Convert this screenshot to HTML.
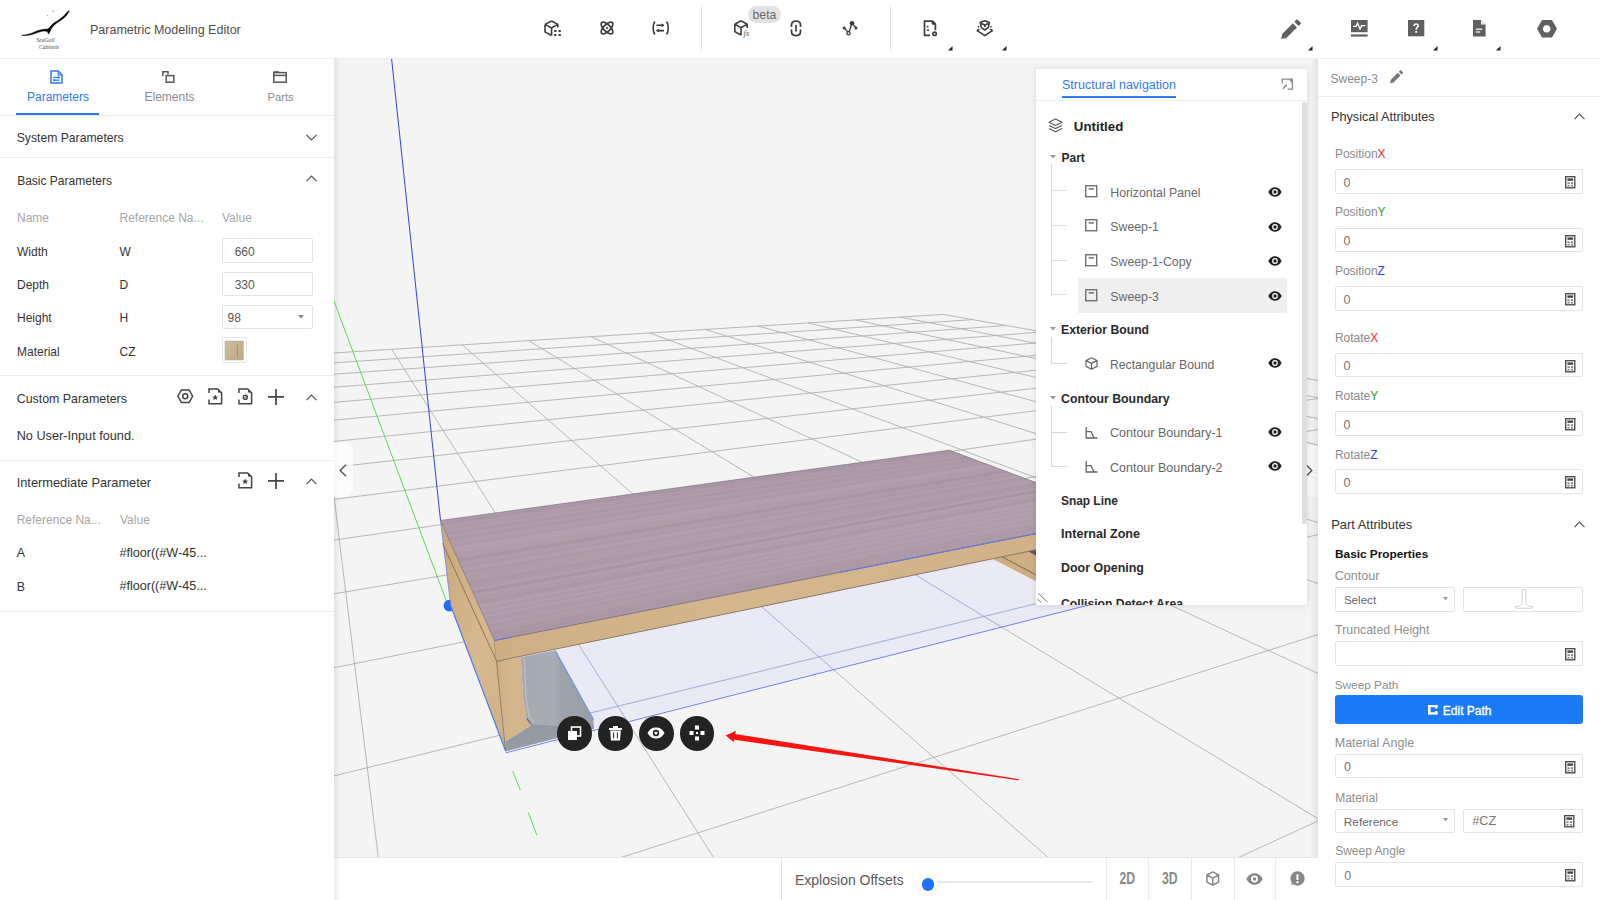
<!DOCTYPE html><html><head><meta charset="utf-8"><style>
*{margin:0;padding:0;box-sizing:border-box}
html,body{width:1600px;height:900px;overflow:hidden;background:#fff;font-family:"Liberation Sans",sans-serif}
.t{position:absolute;white-space:nowrap;line-height:normal}
svg{position:absolute;overflow:visible}
</style></head><body><div style="position:absolute;left:0px;top:0px;width:1600px;height:58px;background:#fff"></div>
<div style="position:absolute;left:0px;top:58px;width:1600px;height:1px;background:#ececec"></div>
<svg style="left:14px;top:4px" width="64" height="50" viewBox="0 0 64 50">
<path d="M7.8,31.2 C12,31 17,30 22.2,27.2 C26,25.6 30,25 33.3,25.2 L35.6,23.3 C37.5,21 39,19.6 41.1,18.3 C43,17 45,16 46.1,15 C48.5,13 50,12 51.1,10.6 C52.5,9 53.6,7.8 54.8,6.6 L55.1,7.3 C54,9 53,10.6 52.2,11.7 C50.5,13.5 49,15 47.2,16.1 C45,17.5 43.5,18.5 42.2,19.4 C40,21 38,23 36.9,25.6 L35.5,28.5 L34.4,30.2 L33.6,27.6 C31,26.6 28,27 25,28 C19,30.2 13,32.5 7.8,31.2 Z" fill="#000" stroke="#000" stroke-width="0.5"/>
<circle cx="39.2" cy="7.2" r="0.6" fill="#555"/><circle cx="33.6" cy="11.4" r="0.5" fill="#888"/>
<text x="22.5" y="37.6" font-family="Liberation Serif" font-style="italic" font-size="5.6" fill="#444">SeaGull</text>
<text x="25" y="44.8" font-family="Liberation Serif" font-style="italic" font-size="5.6" fill="#444">Cabinets</text>
</svg>
<div class="t" style="left:90.0px;top:23.3px;font-size:12.5px;color:#4e4e4e;font-weight:400;">Parametric Modeling Editor</div>
<svg style="left:544px;top:20px" width="18" height="17" viewBox="0 0 18 17" fill="none" stroke="#3c3c3c" stroke-width="1.6" stroke-linejoin="round">
<path d="M7.6,1 L13.8,4.4 L13.8,7.5 M1,4.4 L7.6,1 M1,4.4 L1,11.9 L7.6,15.5 M1,4.4 L7.6,8 L13.8,4.4 M7.6,8 L7.6,15.5"/>
<g fill="#3c3c3c" stroke="none"><rect x="10.2" y="10" width="2.3" height="2"/><rect x="14.5" y="10" width="2.3" height="2"/><rect x="10.2" y="14" width="2.3" height="2"/><rect x="14.5" y="14" width="2.3" height="2"/></g></svg>
<svg style="left:599px;top:20px" width="16" height="16" viewBox="0 0 16 16" fill="none" stroke="#3c3c3c" stroke-width="1.7">
<ellipse cx="8" cy="8" rx="7.6" ry="3.4" transform="rotate(45 8 8)"/><ellipse cx="8" cy="8" rx="7.6" ry="3.4" transform="rotate(-45 8 8)"/><circle cx="8" cy="8" r="0.9" stroke-width="1"/></svg>
<svg style="left:652px;top:21px" width="18" height="14" viewBox="0 0 18 14" fill="none" stroke="#3c3c3c" stroke-width="1.6">
<path d="M2.8,0.5 C0.6,4 0.6,10 2.8,13.5 M14.6,0.5 C16.8,4 16.8,10 14.6,13.5 M4.5,4.3 L11.5,4.3 M4.5,9.6 L12,9.6"/>
<path d="M9.6,2.3 L12.5,4.3 L9.6,6.3 Z M7.2,7.6 L4.3,9.6 L7.2,11.6 Z" fill="#3c3c3c" stroke="none"/></svg>
<div style="position:absolute;left:701px;top:6px;width:1px;height:45px;background:#e4e4e4"></div>
<div style="position:absolute;left:890px;top:6px;width:1px;height:45px;background:#e4e4e4"></div>
<svg style="left:734px;top:20px" width="18" height="18" viewBox="0 0 18 18" fill="none" stroke="#3c3c3c" stroke-width="1.6" stroke-linejoin="round">
<path d="M7,0.8 L13.2,4.2 L13.2,8 M0.8,4.2 L7,0.8 M0.8,4.2 L0.8,11.6 L7,15 M0.8,4.2 L7,7.6 L13.2,4.2 M7,7.6 L7,15"/></svg>
<div class="t" style="left:743.5px;top:28.8px;font-size:8px;color:#555;font-weight:400;font-family:'Liberation Serif'"><i>fx</i></div>
<div style="position:absolute;left:748px;top:6px;width:33px;height:17px;background:#e2e2e2;border-radius:9px"></div>
<div class="t" style="left:752.6px;top:7.6px;font-size:12.2px;color:#6a6a6a;font-weight:400;">beta</div>
<svg style="left:790px;top:20px" width="12" height="17" viewBox="0 0 12 17" fill="none" stroke="#3c3c3c" stroke-width="1.7" stroke-linecap="round">
<path d="M1.5,6.2 L1.5,5 C1.5,2.6 3.4,1 6,1 C8.6,1 10.5,2.6 10.5,5 L10.5,6.2 M1.5,10 L1.5,11.6 C1.5,14 3.4,15.6 6,15.6 C8.6,15.6 10.5,14 10.5,11.6 L10.5,10 M6,5.6 L6,10.8"/></svg>
<svg style="left:842px;top:20px" width="17" height="17" viewBox="0 0 17 17" fill="none" stroke="#3c3c3c" stroke-width="1.3">
<path d="M2.3,8 L6.4,12.6 M7.1,12 L9.9,3.3 M10.3,3.6 L14.2,8"/>
<circle cx="10" cy="3.2" r="2.3" fill="#3c3c3c" stroke="none"/><circle cx="2.2" cy="8" r="1.5" fill="#3c3c3c" stroke="none"/><circle cx="14" cy="8" r="1.5" fill="#3c3c3c" stroke="none"/><circle cx="6.5" cy="13.3" r="1.6" fill="#fff"/></svg>
<svg style="left:923px;top:20px" width="17" height="17" viewBox="0 0 17 17" fill="none" stroke="#3c3c3c" stroke-width="1.7" stroke-linejoin="round">
<path d="M7,15.3 L1.5,15.3 L1.5,1.2 L9.6,1.2 L12.4,4.2 L12.4,10.2 M9.4,1.4 L9.6,3.8 L12.2,4"/>
<path d="M3.8,6.6 L5.4,6.6 M3.8,10.2 L6,10.2" stroke-width="1.6"/><circle cx="11.6" cy="13.8" r="1.7"/></svg>
<svg style="left:976px;top:20px" width="18" height="17" viewBox="0 0 18 17" fill="none" stroke="#3c3c3c" stroke-width="1.6" stroke-linejoin="round">
<path d="M3.4,9.2 L1.2,10.7 L8.8,15.6 L16.4,10.7 L14.2,9.2"/>
<path d="M8.8,0.8 L13.4,2.6 L12.2,7.6 L8.8,10 L5.4,7.6 L4.2,2.6 Z M5.2,3.4 L8.8,5 L12.4,3.4 M8.8,5 L8.8,7"/>
<path d="M2,6.4 L3.2,7.2 M15.6,6.4 L14.4,7.2"/></svg>
<svg style="left:948px;top:45.5px" width="4.5" height="4.5" viewBox="0 0 4 4"><path d="M4,0 L4,4 L0,4 Z" fill="#222"/></svg>
<svg style="left:1002px;top:45.5px" width="4.5" height="4.5" viewBox="0 0 4 4"><path d="M4,0 L4,4 L0,4 Z" fill="#222"/></svg>
<svg style="left:1308px;top:45.5px" width="4.5" height="4.5" viewBox="0 0 4 4"><path d="M4,0 L4,4 L0,4 Z" fill="#222"/></svg>
<svg style="left:1433px;top:45.5px" width="4.5" height="4.5" viewBox="0 0 4 4"><path d="M4,0 L4,4 L0,4 Z" fill="#222"/></svg>
<svg style="left:1496px;top:45.5px" width="4.5" height="4.5" viewBox="0 0 4 4"><path d="M4,0 L4,4 L0,4 Z" fill="#222"/></svg>
<svg style="left:1281px;top:18.5px" width="20.5" height="20.5" viewBox="0 0 20 20">
<path d="M0.2,19.6 L1.2,14.6 L11.6,4.2 L15.6,8.2 L5.2,18.6 Z" fill="#606060"/><path d="M13,2.6 L14.9,0.7 C15.3,0.3 15.9,0.3 16.3,0.7 L19.1,3.5 C19.5,3.9 19.5,4.5 19.1,4.9 L17.2,6.8 Z" fill="#606060"/></svg>
<svg style="left:1351px;top:19.5px" width="17" height="17" viewBox="0 0 17 17">
<rect x="0" y="0" width="16.6" height="12.2" fill="#606060"/><rect x="0" y="14.4" width="16.6" height="2.2" fill="#606060"/>
<path d="M2,6.4 L5,6.4 L6.6,3.2 L9,9 L10.6,5.6 L14.4,5.6" fill="none" stroke="#fff" stroke-width="1.3"/></svg>
<svg style="left:1408px;top:20.3px" width="16.3" height="16.3" viewBox="0 0 16 16">
<rect width="16" height="16" fill="#606060"/><path d="M5.2,6 C5.2,4.2 6.4,3.2 8,3.2 C9.7,3.2 10.8,4.2 10.8,5.6 C10.8,7.4 8.8,7.6 8.8,9.6 L7.2,9.6 C7.2,7.2 9.1,7 9.1,5.7 C9.1,5 8.6,4.6 8,4.6 C7.3,4.6 6.9,5.1 6.9,6 Z" fill="#fff"/><rect x="7.1" y="10.8" width="1.8" height="1.8" fill="#fff"/></svg>
<svg style="left:1472.5px;top:20.3px" width="13" height="17" viewBox="0 0 13 17">
<path d="M0,0 L8,0 L12.6,4.6 L12.6,16.6 L0,16.6 Z" fill="#606060"/><path d="M8,0 L8,4.6 L12.6,4.6 Z" fill="#fff"/><path d="M8.6,0.6 L8.6,3.8 L11.8,3.8" fill="#ddd"/>
<rect x="2.8" y="8.6" width="6.4" height="1.2" fill="#fff"/><rect x="2.8" y="11.4" width="4.4" height="1.2" fill="#fff"/></svg>
<svg style="left:1537px;top:19.5px" width="20" height="17.5" viewBox="0 0 20 17.5">
<path d="M5,0 L15,0 L20,8.75 L15,17.5 L5,17.5 L0,8.75 Z M9.7,5 A3.8,3.8 0 1 0 9.71,5 Z" fill="#606060" fill-rule="evenodd"/></svg>
<div style="position:absolute;left:0px;top:59px;width:334px;height:841px;background:#fff"></div>
<svg style="left:50px;top:69.5px" width="13" height="14" viewBox="0 0 13 14" fill="none" stroke="#2f7bea" stroke-width="1.5">
<path d="M1,1 L8.2,1 L12,4.8 L12,13 L1,13 Z"/><path d="M8.2,1 L8.2,4.8 L12,4.8" stroke-width="1.2"/><path d="M3.4,7.4 L9.6,7.4 M3.4,10.2 L9.6,10.2" stroke-width="1.2"/><path d="M8.2,6.2 L9.8,7.4 L8.2,8.6 M4.8,9 L3.2,10.2 L4.8,11.4" stroke-width="1"/></svg>
<div class="t" style="left:27.0px;top:90.1px;font-size:12px;color:#2f7bea;font-weight:400;">Parameters</div>
<div style="position:absolute;left:16px;top:112.7px;width:83px;height:2.3px;background:#2f7bea"></div>
<svg style="left:162px;top:71px" width="13" height="12" viewBox="0 0 13 12" fill="none" stroke="#555" stroke-width="1.5">
<path d="M0.8,5 L0.8,0.8 L6,0.8 L6,3.4"/><rect x="4.2" y="4.6" width="7.6" height="6.6"/></svg>
<div class="t" style="left:144.5px;top:90.1px;font-size:12px;color:#8a8a8a;font-weight:400;">Elements</div>
<svg style="left:272.5px;top:70.5px" width="14" height="12" viewBox="0 0 14 12" fill="none" stroke="#555" stroke-width="1.5">
<rect x="0.8" y="1.6" width="12.4" height="9.6"/><path d="M0.8,4.4 L13.2,4.4"/><path d="M0.8,0.8 L6,0.8" stroke-width="1.2"/></svg>
<div class="t" style="left:267.5px;top:90.9px;font-size:11.2px;color:#8a8a8a;font-weight:400;">Parts</div>
<div style="position:absolute;left:0px;top:115px;width:334px;height:1px;background:#ececec"></div>
<div class="t" style="left:16.7px;top:131.0px;font-size:12.2px;color:#333;font-weight:400;">System Parameters</div>
<svg style="left:305.5px;top:133.5px" width="11" height="7" viewBox="0 0 11 7"><path d="M0.5,0.8 L5.5,6 L10.5,0.8" fill="none" stroke="#555" stroke-width="1.2"/></svg>
<div style="position:absolute;left:0px;top:157px;width:334px;height:1px;background:#ececec"></div>
<div class="t" style="left:17.2px;top:173.7px;font-size:12px;color:#333;font-weight:400;">Basic Parameters</div>
<svg style="left:305.5px;top:175px" width="11" height="7" viewBox="0 0 11 7"><path d="M0.5,6.2 L5.5,1 L10.5,6.2" fill="none" stroke="#555" stroke-width="1.2"/></svg>
<div class="t" style="left:17.0px;top:210.7px;font-size:12px;color:#a6a6a6;font-weight:400;">Name</div>
<div class="t" style="left:119.5px;top:210.7px;font-size:12px;color:#a6a6a6;font-weight:400;">Reference Na...</div>
<div class="t" style="left:222.0px;top:210.7px;font-size:12px;color:#a6a6a6;font-weight:400;">Value</div>
<div class="t" style="left:17.0px;top:244.6px;font-size:12px;color:#333;font-weight:400;">Width</div>
<div class="t" style="left:119.5px;top:244.6px;font-size:12px;color:#333;font-weight:400;">W</div>
<div class="t" style="left:17.0px;top:278.0px;font-size:12px;color:#333;font-weight:400;">Depth</div>
<div class="t" style="left:119.5px;top:278.0px;font-size:12px;color:#333;font-weight:400;">D</div>
<div class="t" style="left:17.0px;top:311.3px;font-size:12px;color:#333;font-weight:400;">Height</div>
<div class="t" style="left:119.5px;top:311.3px;font-size:12px;color:#333;font-weight:400;">H</div>
<div class="t" style="left:17.0px;top:344.6px;font-size:12px;color:#333;font-weight:400;">Material</div>
<div class="t" style="left:119.5px;top:344.6px;font-size:12px;color:#333;font-weight:400;">CZ</div>
<div style="position:absolute;left:222px;top:238px;width:91px;height:24.5px;background:#fff;border:1px solid #e3e3e3;border-radius:2px"></div>
<div style="position:absolute;left:222px;top:271.5px;width:91px;height:24.5px;background:#fff;border:1px solid #e3e3e3;border-radius:2px"></div>
<div style="position:absolute;left:222px;top:304.5px;width:91px;height:24.5px;background:#fff;border:1px solid #e3e3e3;border-radius:2px"></div>
<div class="t" style="left:234.7px;top:244.6px;font-size:12px;color:#555;font-weight:400;">660</div>
<div class="t" style="left:234.7px;top:278.0px;font-size:12px;color:#555;font-weight:400;">330</div>
<div class="t" style="left:227.5px;top:311.3px;font-size:12px;color:#555;font-weight:400;">98</div>
<svg style="left:297.6px;top:315px" width="6" height="4" viewBox="0 0 6 4"><path d="M0,0 L6,0 L3,3.6 Z" fill="#888"/></svg>
<div style="position:absolute;left:222px;top:337.3px;width:24.8px;height:25.6px;background:#fff;border:1px solid #e6e6e6;border-radius:2px"></div>
<svg style="left:225px;top:340.5px" width="18.5" height="19" viewBox="0 0 18.5 19"><defs><linearGradient id="sw" x1="0" x2="1" y1="0" y2="1"><stop offset="0" stop-color="#d1bf9a"/><stop offset="1" stop-color="#bba987"/></linearGradient></defs>
<rect width="18.5" height="19" fill="url(#sw)" rx="1"/><path d="M12.2,3 L12.6,16.5" stroke="#8a7a5e" stroke-width="0.6"/><rect y="0" width="18.5" height="19" fill="none" stroke="#a9a9a9" stroke-width="0.5"/></svg>
<div style="position:absolute;left:0px;top:375px;width:334px;height:1px;background:#ececec"></div>
<div class="t" style="left:16.7px;top:391.6px;font-size:12.4px;color:#333;font-weight:400;">Custom Parameters</div>
<svg style="left:177px;top:389px" width="16.5" height="14.5" viewBox="0 0 16.5 14.5" fill="none" stroke="#454545" stroke-width="1.5">
<path d="M4.4,0.9 L12.1,0.9 L15.6,7.25 L12.1,13.6 L4.4,13.6 L0.9,7.25 Z"/><circle cx="8.25" cy="7.25" r="2.5"/></svg>
<svg style="left:208px;top:388.2px" width="15" height="17" viewBox="0 0 15 17" fill="none" stroke="#454545" stroke-width="1.5">
<path d="M1,5 L1,0.9 L9.6,0.9 L13.6,4.9 L13.6,15.8 L1,15.8 L1,11.4"/><path d="M10,1.2 L13.4,4.6 L10,4.6 Z" fill="#454545" stroke="none"/>
<path d="M7.2,6.6 L8.1,8.6 L10.2,8.7 L8.6,10 L9.1,12 L7.2,10.9 L5.3,12 L5.8,10 L4.2,8.7 L6.3,8.6 Z" fill="#454545" stroke="none"/></svg>
<svg style="left:238.2px;top:388.2px" width="15" height="17" viewBox="0 0 15 17" fill="none" stroke="#454545" stroke-width="1.5">
<path d="M1,5 L1,0.9 L9.6,0.9 L13.6,4.9 L13.6,15.8 L1,15.8 L1,11.4"/><path d="M10,1.2 L13.4,4.6 L10,4.6 Z" fill="#454545" stroke="none"/>
<circle cx="7.3" cy="9.3" r="2.1" stroke-width="1.4"/><path d="M6,10.6 L8.6,8" stroke-width="1"/></svg>
<svg style="left:268px;top:388.5px" width="16" height="16" viewBox="0 0 16 16"><path d="M8,0 L8,16 M0,7.8 L16,7.8" stroke="#454545" stroke-width="1.7"/></svg>
<svg style="left:305.5px;top:393.5px" width="11" height="7" viewBox="0 0 11 7"><path d="M0.5,6.2 L5.5,1 L10.5,6.2" fill="none" stroke="#555" stroke-width="1.2"/></svg>
<div class="t" style="left:16.7px;top:428.5px;font-size:12.7px;color:#333;font-weight:400;">No User-Input found.</div>
<div style="position:absolute;left:0px;top:459.5px;width:334px;height:1px;background:#ececec"></div>
<div class="t" style="left:16.7px;top:475.1px;font-size:12.8px;color:#333;font-weight:400;">Intermediate Parameter</div>
<svg style="left:238.2px;top:472.4px" width="15" height="17" viewBox="0 0 15 17" fill="none" stroke="#454545" stroke-width="1.5">
<path d="M1,5 L1,0.9 L9.6,0.9 L13.6,4.9 L13.6,15.8 L1,15.8 L1,11.4"/><path d="M10,1.2 L13.4,4.6 L10,4.6 Z" fill="#454545" stroke="none"/>
<path d="M7.2,6.6 L8.1,8.6 L10.2,8.7 L8.6,10 L9.1,12 L7.2,10.9 L5.3,12 L5.8,10 L4.2,8.7 L6.3,8.6 Z" fill="#454545" stroke="none"/></svg>
<svg style="left:268px;top:472.8px" width="16" height="16" viewBox="0 0 16 16"><path d="M8,0 L8,16 M0,7.8 L16,7.8" stroke="#454545" stroke-width="1.7"/></svg>
<svg style="left:305.5px;top:477.8px" width="11" height="7" viewBox="0 0 11 7"><path d="M0.5,6.2 L5.5,1 L10.5,6.2" fill="none" stroke="#555" stroke-width="1.2"/></svg>
<div class="t" style="left:16.7px;top:513.3px;font-size:12px;color:#a6a6a6;font-weight:400;">Reference Na...</div>
<div class="t" style="left:120.0px;top:513.3px;font-size:12px;color:#a6a6a6;font-weight:400;">Value</div>
<div class="t" style="left:16.7px;top:546.3px;font-size:12.4px;color:#333;font-weight:400;">A</div>
<div class="t" style="left:119.4px;top:546.1px;font-size:12.6px;color:#333;font-weight:400;">#floor((#W-45...</div>
<div class="t" style="left:16.7px;top:579.6px;font-size:12.4px;color:#333;font-weight:400;">B</div>
<div class="t" style="left:119.4px;top:579.4px;font-size:12.6px;color:#333;font-weight:400;">#floor((#W-45...</div>
<div style="position:absolute;left:0px;top:610.5px;width:334px;height:1px;background:#ececec"></div>
<div style="position:absolute;left:334px;top:59px;width:984px;height:841px;background:#f4f4f4"></div>
<svg style="left:0;top:0" width="1600" height="900" viewBox="0 0 1600 900"><defs><clipPath id="vp"><rect x="334" y="59" width="984" height="841"/></clipPath><linearGradient id="topg" x1="0" y1="0" x2="0.15" y2="1"><stop offset="0" stop-color="#ac99a6"/><stop offset="0.5" stop-color="#b09daa"/><stop offset="1" stop-color="#ab98a5"/></linearGradient><linearGradient id="wood" x1="0" y1="0" x2="1" y2="0"><stop offset="0" stop-color="#cfae84"/><stop offset="0.5" stop-color="#d6b78d"/><stop offset="1" stop-color="#d2b187"/></linearGradient><linearGradient id="woodL" x1="0" y1="0" x2="1" y2="1"><stop offset="0" stop-color="#c9a67a"/><stop offset="0.6" stop-color="#d8b98f"/><stop offset="1" stop-color="#cfae82"/></linearGradient><linearGradient id="grey" x1="0" y1="0" x2="1" y2="0"><stop offset="0" stop-color="#a3a9b1"/><stop offset="0.45" stop-color="#a7adb5"/><stop offset="0.55" stop-color="#9ea4ad"/><stop offset="1" stop-color="#989ea8"/></linearGradient><linearGradient id="lsh" x1="0" y1="0" x2="1" y2="0"><stop offset="0" stop-color="#000" stop-opacity="0.07"/><stop offset="1" stop-color="#000" stop-opacity="0"/></linearGradient></defs><defs><clipPath id="topclip"><polygon points="440.5,520.5 949.4,450.2 1036.0,482.6 1036.0,533.6 494.5,640.5"/></clipPath></defs><g clip-path="url(#vp)"><path d="M943.0,314.4L21810.2,3988.8M900.3,317.1L19896.3,3984.8M855.3,319.9L17982.4,3980.8M808.0,322.9L16068.5,3976.7M758.1,326.1L14154.6,3972.7M705.5,329.4L12240.7,3968.7M649.9,332.9L10326.8,3964.7M591.0,336.6L8412.9,3960.7M528.6,340.6L6499.0,3956.6M462.3,344.8L4585.1,3952.6M391.7,349.3L2671.2,3948.6M316.5,354.0L757.3,3944.6M236.0,359.1L-1156.6,3940.6M149.9,364.6L-3070.5,3936.5M57.4,370.4L-4984.4,3932.5M-42.2,376.8L-6898.3,3928.5M-149.7,383.6L-8812.2,3924.5M-266.1,390.9L-10726.1,3920.5M-392.6,398.9L-12640.0,3916.4M-530.5,407.7L-14553.8,3912.4M-681.5,417.2L-16467.7,3908.4M-847.4,427.8L-18381.6,3904.4M-1030.8,439.4L-20295.5,3900.4M-1234.3,452.3L-22209.4,3896.4M-1461.6,466.7L-24123.3,3892.3M-1717.2,482.8L-26037.2,3888.3M-2006.5,501.2L-27951.1,3884.3M-2336.7,522.1L-29865.0,3880.3M-2717.3,546.2L-31778.9,3876.3M-3160.7,574.3L-33692.8,3872.2M-3683.7,607.4L-35606.7,3868.2M-4310.1,647.1L-37520.6,3864.2M-5073.7,695.4L-39434.5,3860.2M-6025.3,755.7L-41348.4,3856.2M-7243.9,832.9L-43262.3,3852.1M-8860.3,935.3L-45176.2,3848.1M-11107.4,1077.6L-47090.1,3844.1M-14443.6,1288.9L-49004.0,3840.1M-19914.0,1635.4L-50917.9,3836.1M-30529.7,2307.7L-52831.8,3832.0M943.0,314.4L-54540.1,3828.5M973.1,319.6L-51034.5,3835.8M1006.1,325.5L-47528.9,3843.2M1042.6,331.9L-44023.2,3850.5M1082.9,339.0L-40517.6,3857.9M1127.9,346.9L-37012.0,3865.3M1178.4,355.8L-33506.3,3872.6M1235.4,365.8L-30000.7,3880.0M1300.3,377.3L-26495.1,3887.4M1374.8,390.4L-22989.4,3894.7M1461.3,405.6L-19483.8,3902.1M1562.9,423.5L-15978.2,3909.4M1683.9,444.8L-12472.6,3916.8M1830.6,470.6L-8966.9,3924.2M2011.9,502.6L-5461.3,3931.5M2241.9,543.1L-1955.7,3938.9M2543.2,596.1L1550.0,3946.2M2955.0,668.6L5055.6,3953.6M3551.8,773.7L8561.2,3961.0M4494.3,939.7L12066.9,3968.3M6205.1,1240.9L15572.5,3975.7M10271.0,1956.9L19078.1,3983.1" stroke="#b0b0b0" stroke-width="0.9" fill="none"/><path d="M391.5,58 L440.5,520.5" stroke="#3b3bf0" stroke-width="1" fill="none"/><path d="M448,605.4 L334,301" stroke="#52e052" stroke-width="1" fill="none"/><path d="M512.7,771.2 L520.3,790 M528.3,812.5 L536.8,835" stroke="#52e052" stroke-width="1" fill="none"/><circle cx="449.4" cy="605.6" r="5.8" fill="#1f6ff0"/><polygon points="555.3,650.7 1120.0,530.0 1114.2,598.6 594.0,728.7 593.3,719.3" fill="#e0e0fa" fill-opacity="0.5"/><clipPath id="lavc"><polygon points="555.3,650.7 1120.0,530.0 1114.2,598.6 594.0,728.7 593.3,719.3"/></clipPath><path d="M943.0,314.4L21810.2,3988.8M900.3,317.1L19896.3,3984.8M855.3,319.9L17982.4,3980.8M808.0,322.9L16068.5,3976.7M758.1,326.1L14154.6,3972.7M705.5,329.4L12240.7,3968.7M649.9,332.9L10326.8,3964.7M591.0,336.6L8412.9,3960.7M528.6,340.6L6499.0,3956.6M462.3,344.8L4585.1,3952.6M391.7,349.3L2671.2,3948.6M316.5,354.0L757.3,3944.6M236.0,359.1L-1156.6,3940.6M149.9,364.6L-3070.5,3936.5M57.4,370.4L-4984.4,3932.5M-42.2,376.8L-6898.3,3928.5M-149.7,383.6L-8812.2,3924.5M-266.1,390.9L-10726.1,3920.5M-392.6,398.9L-12640.0,3916.4M-530.5,407.7L-14553.8,3912.4M-681.5,417.2L-16467.7,3908.4M-847.4,427.8L-18381.6,3904.4M-1030.8,439.4L-20295.5,3900.4M-1234.3,452.3L-22209.4,3896.4M-1461.6,466.7L-24123.3,3892.3M-1717.2,482.8L-26037.2,3888.3M-2006.5,501.2L-27951.1,3884.3M-2336.7,522.1L-29865.0,3880.3M-2717.3,546.2L-31778.9,3876.3M-3160.7,574.3L-33692.8,3872.2M-3683.7,607.4L-35606.7,3868.2M-4310.1,647.1L-37520.6,3864.2M-5073.7,695.4L-39434.5,3860.2M-6025.3,755.7L-41348.4,3856.2M-7243.9,832.9L-43262.3,3852.1M-8860.3,935.3L-45176.2,3848.1M-11107.4,1077.6L-47090.1,3844.1M-14443.6,1288.9L-49004.0,3840.1M-19914.0,1635.4L-50917.9,3836.1M-30529.7,2307.7L-52831.8,3832.0M943.0,314.4L-54540.1,3828.5M973.1,319.6L-51034.5,3835.8M1006.1,325.5L-47528.9,3843.2M1042.6,331.9L-44023.2,3850.5M1082.9,339.0L-40517.6,3857.9M1127.9,346.9L-37012.0,3865.3M1178.4,355.8L-33506.3,3872.6M1235.4,365.8L-30000.7,3880.0M1300.3,377.3L-26495.1,3887.4M1374.8,390.4L-22989.4,3894.7M1461.3,405.6L-19483.8,3902.1M1562.9,423.5L-15978.2,3909.4M1683.9,444.8L-12472.6,3916.8M1830.6,470.6L-8966.9,3924.2M2011.9,502.6L-5461.3,3931.5M2241.9,543.1L-1955.7,3938.9M2543.2,596.1L1550.0,3946.2M2955.0,668.6L5055.6,3953.6M3551.8,773.7L8561.2,3961.0M4494.3,939.7L12066.9,3968.3M6205.1,1240.9L15572.5,3975.7M10271.0,1956.9L19078.1,3983.1" stroke="#8f8fd8" stroke-opacity="0.55" stroke-width="0.9" fill="none" clip-path="url(#lavc)"/><polygon points="992.9,559.1 1036.0,549.8 1036.0,581.3" fill="#cfae82"/><path d="M1002.7,557.2 L1036,574.8" stroke="#5d5348" stroke-width="0.8"/><polygon points="1028.0,551.3 1036.0,549.8 1036.0,555.5" fill="#5a5a5a"/><path d="M505.7,752.8 L1114.2,598.6" stroke="#6f7ff2" stroke-width="1" fill="none"/><polygon points="520.7,657.3 555.3,650.2 593.3,719.3 594.0,728.7 531.3,725.3 526.7,720.0 523.3,700.0" fill="url(#grey)"/><polygon points="505.3,741.3 531.3,725.3 594.0,728.7 506.0,751.3" fill="#959ba5"/><path d="M555.3,650.5 L593.6,719.5" stroke="#5a86f0" stroke-width="0.9" fill="none"/><path d="M531,725.2 L594,728.6" stroke="#7d8390" stroke-width="0.7" fill="none"/><path d="M524.2,658.5 L526.2,700 L529,716.5 L534.5,722.5" stroke="#b9bec5" stroke-width="1.6" fill="none"/><path d="M526.5,718 L531.3,725.3" stroke="#5f646b" stroke-width="1.2" fill="none"/><polygon points="496.7,661.3 520.7,657.3 523.3,700.0 526.7,720.0 531.3,725.3 505.3,741.3" fill="url(#wood)"/><polygon points="440.5,520.5 494.5,640.5 505.7,751.3 450.8,606.0" fill="url(#woodL)"/><path d="M442.5,543.3 L496.7,661.3 M494.5,640.5 L505.7,751.3" stroke="#6b5a45" stroke-width="0.7" fill="none"/><path d="M450.8,606 L505.7,751.3" stroke="#4f7cf0" stroke-width="1.2" fill="none"/><path d="M440.5,520.5 L450.8,606" stroke="#6a70e8" stroke-width="0.7" fill="none"/><polygon points="494.5,640.5 1036.0,533.6 1036.0,549.8 496.7,661.3" fill="url(#wood)"/><path d="M496.7,661.3 L1036,549.8" stroke="#6e6253" stroke-width="0.8" fill="none"/><polygon points="440.5,520.5 949.4,450.2 1036.0,482.6 1036.0,533.6 494.5,640.5" fill="url(#topg)"/><g clip-path="url(#topclip)"><path d="M453.4,549.1 L990.6,465.0" stroke="#b8a6b2" stroke-width="1.34" stroke-opacity="0.28"/><path d="M473.1,593.0 L1053.9,488.7" stroke="#9d8996" stroke-width="1.81" stroke-opacity="0.28"/><path d="M489.6,629.6 L1106.7,508.4" stroke="#bcacb7" stroke-width="1.12" stroke-opacity="0.28"/><path d="M453.2,548.6 L990.0,464.8" stroke="#bcacb7" stroke-width="1.68" stroke-opacity="0.28"/><path d="M470.2,586.5 L1044.5,485.2" stroke="#bcacb7" stroke-width="1.88" stroke-opacity="0.28"/><path d="M448.6,538.6 L975.5,459.3" stroke="#b8a6b2" stroke-width="2.34" stroke-opacity="0.28"/><path d="M468.8,583.3 L1040.0,483.4" stroke="#9d8996" stroke-width="1.94" stroke-opacity="0.28"/><path d="M444.0,528.2 L960.5,453.7" stroke="#9d8996" stroke-width="1.20" stroke-opacity="0.28"/><path d="M442.2,524.2 L954.8,451.6" stroke="#a38f9c" stroke-width="1.55" stroke-opacity="0.28"/><path d="M479.3,606.8 L1073.8,496.1" stroke="#bcacb7" stroke-width="2.03" stroke-opacity="0.28"/><path d="M490.2,631.0 L1108.8,509.2" stroke="#bcacb7" stroke-width="2.06" stroke-opacity="0.28"/><path d="M471.7,589.7 L1049.3,486.9" stroke="#b8a6b2" stroke-width="2.36" stroke-opacity="0.28"/><path d="M445.8,532.2 L966.3,455.9" stroke="#b8a6b2" stroke-width="1.59" stroke-opacity="0.28"/><path d="M454.4,551.5 L994.1,466.3" stroke="#bcacb7" stroke-width="2.16" stroke-opacity="0.28"/><path d="M486.7,623.1 L1097.4,504.9" stroke="#bcacb7" stroke-width="1.61" stroke-opacity="0.28"/><path d="M461.3,566.8 L1016.2,474.6" stroke="#a38f9c" stroke-width="1.67" stroke-opacity="0.28"/><path d="M462.5,569.4 L1020.0,476.0" stroke="#b8a6b2" stroke-width="2.41" stroke-opacity="0.28"/><path d="M477.3,602.3 L1067.5,493.7" stroke="#9d8996" stroke-width="2.31" stroke-opacity="0.28"/><path d="M494.0,639.4 L1120.9,513.7" stroke="#b8a6b2" stroke-width="2.00" stroke-opacity="0.28"/><path d="M458.1,559.7 L1005.9,470.7" stroke="#9d8996" stroke-width="2.03" stroke-opacity="0.28"/><path d="M451.9,545.8 L985.9,463.3" stroke="#a38f9c" stroke-width="1.17" stroke-opacity="0.28"/><path d="M443.9,528.1 L960.4,453.7" stroke="#bcacb7" stroke-width="0.78" stroke-opacity="0.28"/><path d="M483.7,616.6 L1088.0,501.4" stroke="#bcacb7" stroke-width="2.39" stroke-opacity="0.28"/><path d="M441.6,522.9 L952.9,450.9" stroke="#bcacb7" stroke-width="2.14" stroke-opacity="0.28"/><path d="M487.6,625.2 L1100.5,506.1" stroke="#9d8996" stroke-width="1.81" stroke-opacity="0.28"/><path d="M481.6,611.9 L1081.2,498.9" stroke="#bcacb7" stroke-width="2.04" stroke-opacity="0.28"/><path d="M458.4,560.2 L1006.7,471.0" stroke="#a38f9c" stroke-width="1.61" stroke-opacity="0.28"/><path d="M494.4,640.3 L1122.2,514.2" stroke="#a38f9c" stroke-width="0.61" stroke-opacity="0.28"/><path d="M446.3,533.5 L968.1,456.6" stroke="#9d8996" stroke-width="2.50" stroke-opacity="0.28"/><path d="M493.0,637.1 L1117.6,512.5" stroke="#a38f9c" stroke-width="1.82" stroke-opacity="0.28"/><path d="M448.9,539.2 L976.4,459.7" stroke="#9d8996" stroke-width="2.56" stroke-opacity="0.28"/><path d="M458.8,561.3 L1008.2,471.6" stroke="#a38f9c" stroke-width="2.52" stroke-opacity="0.28"/><path d="M488.9,628.1 L1104.6,507.6" stroke="#bcacb7" stroke-width="1.35" stroke-opacity="0.28"/><path d="M487.5,624.9 L1100.0,505.9" stroke="#bcacb7" stroke-width="1.89" stroke-opacity="0.28"/><path d="M472.7,592.0 L1052.5,488.1" stroke="#9d8996" stroke-width="1.84" stroke-opacity="0.28"/><path d="M491.3,633.4 L1112.2,510.5" stroke="#a38f9c" stroke-width="1.46" stroke-opacity="0.28"/><path d="M479.4,606.9 L1074.1,496.2" stroke="#b8a6b2" stroke-width="2.47" stroke-opacity="0.28"/><path d="M464.1,573.0 L1025.1,477.9" stroke="#a38f9c" stroke-width="1.64" stroke-opacity="0.28"/><path d="M470.1,586.3 L1044.3,485.1" stroke="#9d8996" stroke-width="2.18" stroke-opacity="0.28"/><path d="M493.8,639.0 L1120.3,513.5" stroke="#a38f9c" stroke-width="0.64" stroke-opacity="0.28"/><path d="M473.8,594.4 L1056.0,489.4" stroke="#b8a6b2" stroke-width="0.72" stroke-opacity="0.28"/><path d="M474.4,595.8 L1058.0,490.2" stroke="#bcacb7" stroke-width="1.31" stroke-opacity="0.28"/><path d="M490.0,630.6 L1108.2,509.0" stroke="#a38f9c" stroke-width="2.08" stroke-opacity="0.28"/><path d="M441.7,523.2 L953.2,451.0" stroke="#9d8996" stroke-width="2.51" stroke-opacity="0.28"/><path d="M441.6,523.1 L953.1,451.0" stroke="#a38f9c" stroke-width="1.10" stroke-opacity="0.28"/></g><path d="M440.5,520.5 L949.4,450.2 L1036,482.6" stroke="#6e6478" stroke-width="0.6" fill="none"/><path d="M494.5,640.5 L1036,533.6" stroke="#6a6678" stroke-width="0.8" fill="none"/><path d="M494.5,640.5 L512,637 M840,572.3 L1036,533.6" stroke="#5d78ee" stroke-width="1" fill="none"/><path d="M440.5,520.5 L494.5,640.5" stroke="#6f6070" stroke-width="0.6" fill="none"/><path d="M725.6,735.5 L736,730.8 L735,734.0 L1018.8,779.2 L1018.8,780.3 L734.2,739.8 L734,742.2 Z" fill="#fa1410"/><rect x="334" y="59" width="6" height="841" fill="url(#lsh)"/></g></svg>
<div style="position:absolute;left:557.1px;top:716.0px;width:34.8px;height:34.8px;background:#232323;border-radius:50%"></div>
<div style="position:absolute;left:597.9px;top:716.0px;width:34.8px;height:34.8px;background:#232323;border-radius:50%"></div>
<div style="position:absolute;left:638.8000000000001px;top:716.0px;width:34.8px;height:34.8px;background:#232323;border-radius:50%"></div>
<div style="position:absolute;left:679.6px;top:716.0px;width:34.8px;height:34.8px;background:#232323;border-radius:50%"></div>
<svg style="left:566px;top:724.5px" width="17" height="17" viewBox="0 0 17 17"><rect x="5.5" y="2" width="9" height="9" fill="none" stroke="#fff" stroke-width="1.6"/><rect x="2" y="6" width="9" height="9" fill="#fff"/></svg>
<svg style="left:608px;top:724.5px" width="15" height="17" viewBox="0 0 15 17"><rect x="1" y="3" width="13" height="2" fill="#fff"/><rect x="5" y="1" width="5" height="2" fill="#fff"/><path d="M2.2,5.5 L12.8,5.5 L12,15.6 L3,15.6 Z" fill="#fff"/><path d="M5.6,7.5 L5.6,13.5 M9.4,7.5 L9.4,13.5" stroke="#212121" stroke-width="1"/></svg>
<svg style="left:647px;top:727px" width="18" height="12" viewBox="0 0 18 12"><path d="M0.5,6 C3,1.5 6,0.5 9,0.5 C12,0.5 15,1.5 17.5,6 C15,10.5 12,11.5 9,11.5 C6,11.5 3,10.5 0.5,6 Z" fill="#fff"/><circle cx="9" cy="6" r="3.2" fill="#212121"/><circle cx="9" cy="6" r="1.6" fill="#fff"/></svg>
<svg style="left:689px;top:725px" width="16" height="16" viewBox="0 0 16 16" fill="#fff"><rect x="6" y="0.5" width="4" height="4"/><rect x="6" y="11.5" width="4" height="4"/><rect x="0.5" y="6" width="4" height="4"/><rect x="11.5" y="6" width="4" height="4"/><rect x="7" y="7" width="2" height="2"/></svg>
<div style="position:absolute;left:334px;top:443px;width:19px;height:54px;background:rgba(255,255,255,0.72);border-radius:0 9px 9px 0"></div>
<svg style="left:338.8px;top:463.5px" width="8" height="13" viewBox="0 0 8 13"><path d="M7,0.8 L1.2,6.5 L7,12.2" fill="none" stroke="#555" stroke-width="1.4"/></svg>
<div style="position:absolute;left:1301px;top:445.5px;width:17px;height:51px;background:rgba(255,255,255,0.72);border-radius:9px 0 0 9px"></div>
<svg style="left:1305.4px;top:463.5px" width="8" height="13" viewBox="0 0 8 13"><path d="M1,0.8 L6.8,6.5 L1,12.2" fill="none" stroke="#555" stroke-width="1.4"/></svg>
<div style="position:absolute;left:1036px;top:69.2px;width:271px;height:536px;background:#fff;box-shadow:0 0 6px rgba(0,0,0,0.12);border-radius:2px;overflow:hidden">
</div>
<div class="t" style="left:1062.0px;top:78.3px;font-size:12.5px;color:#2f7bf0;font-weight:400;">Structural navigation</div>
<div style="position:absolute;left:1062px;top:95.8px;width:113.5px;height:2px;background:#2f7bf0"></div>
<div style="position:absolute;left:1036px;top:100px;width:271.5px;height:1px;background:#ececec"></div>
<svg style="left:1280.5px;top:78px" width="13" height="13" viewBox="0 0 13 13" fill="none" stroke="#8a8a8a" stroke-width="1.3"><path d="M1.2,5.6 L1.2,1.2 L11.4,1.2 L11.4,11.2 L6.6,11.2"/><path d="M8.4,1.8 L10.8,1.8 L10.8,4.2 Z" fill="#8a8a8a" stroke-width="0.8"/><path d="M2.2,10.4 L5,7.6" stroke-width="1.4" stroke-linecap="round"/><circle cx="5.2" cy="7.4" r="1" fill="#8a8a8a" stroke="none"/></svg>
<div style="position:absolute;left:1301.6px;top:101.5px;width:5px;height:422px;background:#dedede;border-radius:2px"></div>
<svg style="left:1047.5px;top:117.5px" width="15" height="15" viewBox="0 0 15 15" fill="none" stroke="#555" stroke-width="1.1" stroke-linejoin="round"><path d="M7.5,1 L14,4.2 L7.5,7.4 L1,4.2 Z"/><path d="M1,7.4 L7.5,10.6 L14,7.4"/><path d="M1,10.6 L7.5,13.8 L14,10.6"/></svg>
<div class="t" style="left:1073.8px;top:119.0px;font-size:13.3px;color:#1e1e1e;font-weight:700;">Untitled</div>
<svg style="left:1049.5px;top:155.2px" width="6" height="4" viewBox="0 0 6 4"><path d="M0,0 L6,0 L3,3.5 Z" fill="#999"/></svg>
<div class="t" style="left:1061.5px;top:150.9px;font-size:12px;color:#2a2a2a;font-weight:700;">Part</div>
<div style="position:absolute;left:1051.3px;top:164px;width:1px;height:131.5px;background:#d6d6d6"></div>
<div style="position:absolute;left:1077.7px;top:278px;width:209.3px;height:34.7px;background:#efefef"></div>
<div style="position:absolute;left:1051.3px;top:190.2px;width:15.5px;height:1px;background:#dedede"></div>
<svg style="left:1084.8px;top:184.7px" width="12.5" height="12.5" viewBox="0 0 12.5 12.5" fill="none" stroke="#666" stroke-width="1.3"><rect x="0.75" y="0.75" width="11" height="11"/><path d="M3.6,3.9 L8.9,3.9" stroke-width="1.4"/></svg>
<div class="t" style="left:1110.3px;top:185.7px;font-size:12.3px;color:#6a6a6a;font-weight:400;">Horizontal Panel</div>
<svg style="left:1268px;top:186.89999999999998px" width="14" height="10" viewBox="0 0 14 10"><path d="M0.3,5 C2.2,1.4 4.6,0.3 7,0.3 C9.4,0.3 11.8,1.4 13.7,5 C11.8,8.6 9.4,9.7 7,9.7 C4.6,9.7 2.2,8.6 0.3,5 Z" fill="#222"/><circle cx="7" cy="5" r="2.9" fill="#fff"/><circle cx="7" cy="5" r="1.7" fill="#222"/></svg>
<div style="position:absolute;left:1051.3px;top:224.9px;width:15.5px;height:1px;background:#dedede"></div>
<svg style="left:1084.8px;top:219.4px" width="12.5" height="12.5" viewBox="0 0 12.5 12.5" fill="none" stroke="#666" stroke-width="1.3"><rect x="0.75" y="0.75" width="11" height="11"/><path d="M3.6,3.9 L8.9,3.9" stroke-width="1.4"/></svg>
<div class="t" style="left:1110.3px;top:220.4px;font-size:12.3px;color:#6a6a6a;font-weight:400;">Sweep-1</div>
<svg style="left:1268px;top:221.6px" width="14" height="10" viewBox="0 0 14 10"><path d="M0.3,5 C2.2,1.4 4.6,0.3 7,0.3 C9.4,0.3 11.8,1.4 13.7,5 C11.8,8.6 9.4,9.7 7,9.7 C4.6,9.7 2.2,8.6 0.3,5 Z" fill="#222"/><circle cx="7" cy="5" r="2.9" fill="#fff"/><circle cx="7" cy="5" r="1.7" fill="#222"/></svg>
<div style="position:absolute;left:1051.3px;top:259.6px;width:15.5px;height:1px;background:#dedede"></div>
<svg style="left:1084.8px;top:254.10000000000002px" width="12.5" height="12.5" viewBox="0 0 12.5 12.5" fill="none" stroke="#666" stroke-width="1.3"><rect x="0.75" y="0.75" width="11" height="11"/><path d="M3.6,3.9 L8.9,3.9" stroke-width="1.4"/></svg>
<div class="t" style="left:1110.3px;top:255.1px;font-size:12.3px;color:#6a6a6a;font-weight:400;">Sweep-1-Copy</div>
<svg style="left:1268px;top:256.3px" width="14" height="10" viewBox="0 0 14 10"><path d="M0.3,5 C2.2,1.4 4.6,0.3 7,0.3 C9.4,0.3 11.8,1.4 13.7,5 C11.8,8.6 9.4,9.7 7,9.7 C4.6,9.7 2.2,8.6 0.3,5 Z" fill="#222"/><circle cx="7" cy="5" r="2.9" fill="#fff"/><circle cx="7" cy="5" r="1.7" fill="#222"/></svg>
<div style="position:absolute;left:1051.3px;top:294.3px;width:15.5px;height:1px;background:#dedede"></div>
<svg style="left:1084.8px;top:288.8px" width="12.5" height="12.5" viewBox="0 0 12.5 12.5" fill="none" stroke="#666" stroke-width="1.3"><rect x="0.75" y="0.75" width="11" height="11"/><path d="M3.6,3.9 L8.9,3.9" stroke-width="1.4"/></svg>
<div class="t" style="left:1110.3px;top:289.8px;font-size:12.3px;color:#6a6a6a;font-weight:400;">Sweep-3</div>
<svg style="left:1268px;top:291.0px" width="14" height="10" viewBox="0 0 14 10"><path d="M0.3,5 C2.2,1.4 4.6,0.3 7,0.3 C9.4,0.3 11.8,1.4 13.7,5 C11.8,8.6 9.4,9.7 7,9.7 C4.6,9.7 2.2,8.6 0.3,5 Z" fill="#222"/><circle cx="7" cy="5" r="2.9" fill="#fff"/><circle cx="7" cy="5" r="1.7" fill="#222"/></svg>
<svg style="left:1049.5px;top:327.2px" width="6" height="4" viewBox="0 0 6 4"><path d="M0,0 L6,0 L3,3.5 Z" fill="#999"/></svg>
<div class="t" style="left:1061.0px;top:323.0px;font-size:12.2px;color:#2a2a2a;font-weight:700;">Exterior Bound</div>
<div style="position:absolute;left:1051.3px;top:336.5px;width:1px;height:27px;background:#d6d6d6"></div>
<div style="position:absolute;left:1051.3px;top:363.3px;width:15.5px;height:1px;background:#d6d6d6"></div>
<svg style="left:1085px;top:356.5px" width="13" height="13" viewBox="0 0 13 13" fill="none" stroke="#666" stroke-width="1.2" stroke-linejoin="round"><path d="M6.5,0.8 L12,3.6 L12,9.4 L6.5,12.2 L1,9.4 L1,3.6 Z M1,3.6 L6.5,6.4 L12,3.6 M6.5,6.4 L6.5,12.2"/></svg>
<div class="t" style="left:1110.0px;top:358.3px;font-size:12.2px;color:#666;font-weight:400;">Rectangular Bound</div>
<svg style="left:1267.8px;top:358.3px" width="14" height="10" viewBox="0 0 14 10"><path d="M0.3,5 C2.2,1.4 4.6,0.3 7,0.3 C9.4,0.3 11.8,1.4 13.7,5 C11.8,8.6 9.4,9.7 7,9.7 C4.6,9.7 2.2,8.6 0.3,5 Z" fill="#222"/><circle cx="7" cy="5" r="2.9" fill="#fff"/><circle cx="7" cy="5" r="1.7" fill="#222"/></svg>
<svg style="left:1049.5px;top:396.2px" width="6" height="4" viewBox="0 0 6 4"><path d="M0,0 L6,0 L3,3.5 Z" fill="#999"/></svg>
<div class="t" style="left:1061.0px;top:391.6px;font-size:12.3px;color:#2a2a2a;font-weight:700;">Contour Boundary</div>
<div style="position:absolute;left:1051.3px;top:405.5px;width:1px;height:61.5px;background:#d6d6d6"></div>
<div style="position:absolute;left:1051.3px;top:431.7px;width:15.5px;height:1px;background:#d6d6d6"></div>
<svg style="left:1085px;top:426.7px" width="13" height="12" viewBox="0 0 13 12" fill="none" stroke="#666" stroke-width="1.3"><path d="M1.2,0 L1.2,11 L12.5,11 M1.2,4.6 L6,4.6 L9,11"/></svg>
<div class="t" style="left:1110.0px;top:426.4px;font-size:12.5px;color:#666;font-weight:400;">Contour Boundary-1</div>
<svg style="left:1267.8px;top:426.7px" width="14" height="10" viewBox="0 0 14 10"><path d="M0.3,5 C2.2,1.4 4.6,0.3 7,0.3 C9.4,0.3 11.8,1.4 13.7,5 C11.8,8.6 9.4,9.7 7,9.7 C4.6,9.7 2.2,8.6 0.3,5 Z" fill="#222"/><circle cx="7" cy="5" r="2.9" fill="#fff"/><circle cx="7" cy="5" r="1.7" fill="#222"/></svg>
<div style="position:absolute;left:1051.3px;top:466.3px;width:15.5px;height:1px;background:#d6d6d6"></div>
<svg style="left:1085px;top:461.3px" width="13" height="12" viewBox="0 0 13 12" fill="none" stroke="#666" stroke-width="1.3"><path d="M1.2,0 L1.2,11 L12.5,11 M1.2,4.6 L6,4.6 L9,11"/></svg>
<div class="t" style="left:1110.0px;top:461.0px;font-size:12.5px;color:#666;font-weight:400;">Contour Boundary-2</div>
<svg style="left:1267.8px;top:461.3px" width="14" height="10" viewBox="0 0 14 10"><path d="M0.3,5 C2.2,1.4 4.6,0.3 7,0.3 C9.4,0.3 11.8,1.4 13.7,5 C11.8,8.6 9.4,9.7 7,9.7 C4.6,9.7 2.2,8.6 0.3,5 Z" fill="#222"/><circle cx="7" cy="5" r="2.9" fill="#fff"/><circle cx="7" cy="5" r="1.7" fill="#222"/></svg>
<div class="t" style="left:1061.0px;top:494.2px;font-size:11.9px;color:#2a2a2a;font-weight:700;">Snap Line</div>
<div class="t" style="left:1061.0px;top:526.9px;font-size:12.6px;color:#2a2a2a;font-weight:700;">Internal Zone</div>
<div class="t" style="left:1061.0px;top:561.4px;font-size:12.45px;color:#2a2a2a;font-weight:700;">Door Opening</div>
<div style="position:absolute;left:1036px;top:590px;width:271.5px;height:15.2px;overflow:hidden">
<div class="t" style="left:25.0px;top:6.5px;font-size:12.2px;color:#2a2a2a;font-weight:700;">Collision Detect Area</div>
</div>
<svg style="left:1037px;top:592px" width="11" height="11" viewBox="0 0 11 11"><path d="M1.2,1.3 L10.6,10.2 M0.3,7 L4.3,10.7" stroke="#666" stroke-width="0.9"/></svg>
<div style="position:absolute;left:1318px;top:59px;width:282px;height:841px;background:#fff"></div>
<div style="position:absolute;left:1310px;top:59px;width:8px;height:841px;background:linear-gradient(to right,rgba(0,0,0,0),rgba(0,0,0,0.07))"></div>
<div class="t" style="left:1330.5px;top:71.5px;font-size:12px;color:#8a8a8a;font-weight:400;">Sweep-3</div>
<svg style="left:1389.5px;top:69.8px" width="13.5" height="13.5" viewBox="0 0 20 20"><path d="M0.2,19.6 L1.2,14.6 L11.6,4.2 L15.6,8.2 L5.2,18.6 Z" fill="#777"/><path d="M13,2.6 L14.9,0.7 C15.3,0.3 15.9,0.3 16.3,0.7 L19.1,3.5 C19.5,3.9 19.5,4.5 19.1,4.9 L17.2,6.8 Z" fill="#777"/></svg>
<div style="position:absolute;left:1318px;top:96px;width:282px;height:1px;background:#ececec"></div>
<div class="t" style="left:1331.0px;top:109.6px;font-size:12.7px;color:#333;font-weight:400;">Physical Attributes</div>
<svg style="left:1574px;top:112.8px" width="11" height="7" viewBox="0 0 11 7"><path d="M0.5,6.2 L5.5,1 L10.5,6.2" fill="none" stroke="#555" stroke-width="1.2"/></svg>
<div class="t" style="left:1334.9px;top:146.8px;font-size:12px;color:#8a8a8a;font-weight:400;">Position<span style="color:#f03030">X</span></div>
<div style="position:absolute;left:1335px;top:169.2px;width:247.8px;height:24.8px;background:#fff;border:1px solid #e4e4e4;border-radius:2px"></div>
<div class="t" style="left:1343.5px;top:175.7px;font-size:12.5px;color:#777;font-weight:400;">0</div>
<svg style="left:1564.8px;top:176.2px" width="10.5" height="12.5" viewBox="0 0 10.5 12.5"><rect x="0.7" y="0.7" width="9.1" height="11.1" fill="none" stroke="#444" stroke-width="1.3"/><rect x="2.4" y="2.4" width="5.7" height="2.4" fill="#444"/><rect x="2.4" y="6.2" width="2.2" height="1.8" fill="#888"/><rect x="5.9" y="6.2" width="2.2" height="1.8" fill="#888"/><rect x="2.4" y="8.8" width="2.2" height="1.8" fill="#888"/><rect x="5.9" y="8.8" width="2.2" height="1.8" fill="#888"/></svg>
<div class="t" style="left:1334.9px;top:205.3px;font-size:12px;color:#8a8a8a;font-weight:400;">Position<span style="color:#22a022">Y</span></div>
<div style="position:absolute;left:1335px;top:227.5px;width:247.8px;height:24.8px;background:#fff;border:1px solid #e4e4e4;border-radius:2px"></div>
<div class="t" style="left:1343.5px;top:234.0px;font-size:12.5px;color:#777;font-weight:400;">0</div>
<svg style="left:1564.8px;top:234.5px" width="10.5" height="12.5" viewBox="0 0 10.5 12.5"><rect x="0.7" y="0.7" width="9.1" height="11.1" fill="none" stroke="#444" stroke-width="1.3"/><rect x="2.4" y="2.4" width="5.7" height="2.4" fill="#444"/><rect x="2.4" y="6.2" width="2.2" height="1.8" fill="#888"/><rect x="5.9" y="6.2" width="2.2" height="1.8" fill="#888"/><rect x="2.4" y="8.8" width="2.2" height="1.8" fill="#888"/><rect x="5.9" y="8.8" width="2.2" height="1.8" fill="#888"/></svg>
<div class="t" style="left:1334.9px;top:263.8px;font-size:12px;color:#8a8a8a;font-weight:400;">Position<span style="color:#3a3af0">Z</span></div>
<div style="position:absolute;left:1335px;top:286px;width:247.8px;height:24.8px;background:#fff;border:1px solid #e4e4e4;border-radius:2px"></div>
<div class="t" style="left:1343.5px;top:292.5px;font-size:12.5px;color:#777;font-weight:400;">0</div>
<svg style="left:1564.8px;top:293px" width="10.5" height="12.5" viewBox="0 0 10.5 12.5"><rect x="0.7" y="0.7" width="9.1" height="11.1" fill="none" stroke="#444" stroke-width="1.3"/><rect x="2.4" y="2.4" width="5.7" height="2.4" fill="#444"/><rect x="2.4" y="6.2" width="2.2" height="1.8" fill="#888"/><rect x="5.9" y="6.2" width="2.2" height="1.8" fill="#888"/><rect x="2.4" y="8.8" width="2.2" height="1.8" fill="#888"/><rect x="5.9" y="8.8" width="2.2" height="1.8" fill="#888"/></svg>
<div class="t" style="left:1334.9px;top:330.7px;font-size:12px;color:#8a8a8a;font-weight:400;">Rotate<span style="color:#f03030">X</span></div>
<div style="position:absolute;left:1335px;top:352.6px;width:247.8px;height:24.8px;background:#fff;border:1px solid #e4e4e4;border-radius:2px"></div>
<div class="t" style="left:1343.5px;top:359.1px;font-size:12.5px;color:#777;font-weight:400;">0</div>
<svg style="left:1564.8px;top:359.6px" width="10.5" height="12.5" viewBox="0 0 10.5 12.5"><rect x="0.7" y="0.7" width="9.1" height="11.1" fill="none" stroke="#444" stroke-width="1.3"/><rect x="2.4" y="2.4" width="5.7" height="2.4" fill="#444"/><rect x="2.4" y="6.2" width="2.2" height="1.8" fill="#888"/><rect x="5.9" y="6.2" width="2.2" height="1.8" fill="#888"/><rect x="2.4" y="8.8" width="2.2" height="1.8" fill="#888"/><rect x="5.9" y="8.8" width="2.2" height="1.8" fill="#888"/></svg>
<div class="t" style="left:1334.9px;top:389.3px;font-size:12px;color:#8a8a8a;font-weight:400;">Rotate<span style="color:#22a022">Y</span></div>
<div style="position:absolute;left:1335px;top:411.2px;width:247.8px;height:24.8px;background:#fff;border:1px solid #e4e4e4;border-radius:2px"></div>
<div class="t" style="left:1343.5px;top:417.7px;font-size:12.5px;color:#777;font-weight:400;">0</div>
<svg style="left:1564.8px;top:418.2px" width="10.5" height="12.5" viewBox="0 0 10.5 12.5"><rect x="0.7" y="0.7" width="9.1" height="11.1" fill="none" stroke="#444" stroke-width="1.3"/><rect x="2.4" y="2.4" width="5.7" height="2.4" fill="#444"/><rect x="2.4" y="6.2" width="2.2" height="1.8" fill="#888"/><rect x="5.9" y="6.2" width="2.2" height="1.8" fill="#888"/><rect x="2.4" y="8.8" width="2.2" height="1.8" fill="#888"/><rect x="5.9" y="8.8" width="2.2" height="1.8" fill="#888"/></svg>
<div class="t" style="left:1334.9px;top:447.5px;font-size:12px;color:#8a8a8a;font-weight:400;">Rotate<span style="color:#3a3af0">Z</span></div>
<div style="position:absolute;left:1335px;top:469.4px;width:247.8px;height:24.8px;background:#fff;border:1px solid #e4e4e4;border-radius:2px"></div>
<div class="t" style="left:1343.5px;top:475.9px;font-size:12.5px;color:#777;font-weight:400;">0</div>
<svg style="left:1564.8px;top:476.4px" width="10.5" height="12.5" viewBox="0 0 10.5 12.5"><rect x="0.7" y="0.7" width="9.1" height="11.1" fill="none" stroke="#444" stroke-width="1.3"/><rect x="2.4" y="2.4" width="5.7" height="2.4" fill="#444"/><rect x="2.4" y="6.2" width="2.2" height="1.8" fill="#888"/><rect x="5.9" y="6.2" width="2.2" height="1.8" fill="#888"/><rect x="2.4" y="8.8" width="2.2" height="1.8" fill="#888"/><rect x="5.9" y="8.8" width="2.2" height="1.8" fill="#888"/></svg>
<div class="t" style="left:1331.2px;top:517.4px;font-size:12.9px;color:#333;font-weight:400;">Part Attributes</div>
<svg style="left:1574px;top:520.5px" width="11" height="7" viewBox="0 0 11 7"><path d="M0.5,6.2 L5.5,1 L10.5,6.2" fill="none" stroke="#555" stroke-width="1.2"/></svg>
<div class="t" style="left:1335.1px;top:546.6px;font-size:11.8px;color:#111;font-weight:700;">Basic Properties</div>
<div class="t" style="left:1334.7px;top:568.8px;font-size:12.6px;color:#8e8e8e;font-weight:400;">Contour</div>
<div style="position:absolute;left:1335.1px;top:586.6px;width:119.5px;height:25px;background:#fff;border:1px solid #e4e4e4;border-radius:2px"></div>
<div class="t" style="left:1343.9px;top:593.2px;font-size:11.6px;color:#666;font-weight:400;">Select</div>
<svg style="left:1442.6px;top:596.6px" width="5" height="3.6" viewBox="0 0 5 3.6"><path d="M0,0 L5,0 L2.5,3.6 Z" fill="#999"/></svg>
<div style="position:absolute;left:1462.9px;top:586.6px;width:119.8px;height:25px;background:#fff;border:1px solid #e4e4e4;border-radius:2px"></div>
<svg style="left:1513.5px;top:588.5px" width="20" height="20" viewBox="0 0 20 20" fill="none" stroke="#d0d0d0" stroke-width="1"><path d="M8.2,0.5 L11.8,0.5 L11.8,13.5 C11.8,16 14,17.2 18.5,17.6 L18.5,19.2 L1.5,19.2 L1.5,17.6 C6,17.2 8.2,16 8.2,13.5 Z"/></svg>
<div class="t" style="left:1335.1px;top:623.0px;font-size:12.35px;color:#8e8e8e;font-weight:400;">Truncated Height</div>
<div style="position:absolute;left:1335.1px;top:640.6px;width:247.6px;height:25.5px;background:#fff;border:1px solid #e4e4e4;border-radius:2px"></div>
<svg style="left:1564.7px;top:648px" width="10.5" height="12.5" viewBox="0 0 10.5 12.5"><rect x="0.7" y="0.7" width="9.1" height="11.1" fill="none" stroke="#444" stroke-width="1.3"/><rect x="2.4" y="2.4" width="5.7" height="2.4" fill="#444"/><rect x="2.4" y="6.2" width="2.2" height="1.8" fill="#888"/><rect x="5.9" y="6.2" width="2.2" height="1.8" fill="#888"/><rect x="2.4" y="8.8" width="2.2" height="1.8" fill="#888"/><rect x="5.9" y="8.8" width="2.2" height="1.8" fill="#888"/></svg>
<div class="t" style="left:1334.7px;top:677.5px;font-size:11.8px;color:#8e8e8e;font-weight:400;">Sweep Path</div>
<div style="position:absolute;left:1335.1px;top:694.9px;width:247.6px;height:28.9px;background:#1b7bf6;border-radius:3px"></div>
<svg style="left:1428px;top:705px" width="9.5" height="9.5" viewBox="0 0 9.5 9.5" fill="#fff"><rect x="0" y="0" width="2.6" height="9.5"/><rect x="0" y="0" width="9.5" height="2.2"/><rect x="0" y="7.3" width="9.5" height="2.2"/><rect x="6.8" y="0" width="2.7" height="3.4"/><rect x="6.8" y="6.1" width="2.7" height="3.4"/></svg>
<div class="t" style="left:1442.8px;top:704.1px;font-size:12px;color:#fff;font-weight:400;-webkit-text-stroke:0.35px #fff">Edit Path</div>
<div class="t" style="left:1334.7px;top:735.8px;font-size:12.56px;color:#8e8e8e;font-weight:400;">Material Angle</div>
<div style="position:absolute;left:1335.1px;top:753.9px;width:247.6px;height:24.5px;background:#fff;border:1px solid #e4e4e4;border-radius:2px"></div>
<div class="t" style="left:1343.9px;top:760.3px;font-size:12.5px;color:#777;font-weight:400;">0</div>
<svg style="left:1564.7px;top:761px" width="10.5" height="12.5" viewBox="0 0 10.5 12.5"><rect x="0.7" y="0.7" width="9.1" height="11.1" fill="none" stroke="#444" stroke-width="1.3"/><rect x="2.4" y="2.4" width="5.7" height="2.4" fill="#444"/><rect x="2.4" y="6.2" width="2.2" height="1.8" fill="#888"/><rect x="5.9" y="6.2" width="2.2" height="1.8" fill="#888"/><rect x="2.4" y="8.8" width="2.2" height="1.8" fill="#888"/><rect x="5.9" y="8.8" width="2.2" height="1.8" fill="#888"/></svg>
<div class="t" style="left:1335.2px;top:790.6px;font-size:12px;color:#8e8e8e;font-weight:400;">Material</div>
<div style="position:absolute;left:1335.2px;top:808.5px;width:119.5px;height:24.8px;background:#fff;border:1px solid #e4e4e4;border-radius:2px"></div>
<div class="t" style="left:1343.8px;top:815.2px;font-size:11.8px;color:#666;font-weight:400;">Reference</div>
<svg style="left:1442.8px;top:818px" width="5" height="3.6" viewBox="0 0 5 3.6"><path d="M0,0 L5,0 L2.5,3.6 Z" fill="#999"/></svg>
<div style="position:absolute;left:1462.8px;top:808.5px;width:119.8px;height:24.8px;background:#fff;border:1px solid #e4e4e4;border-radius:2px"></div>
<div class="t" style="left:1472.2px;top:814.4px;font-size:12.7px;color:#777;font-weight:400;">#CZ</div>
<svg style="left:1564.3px;top:814.5px" width="10.5" height="12.5" viewBox="0 0 10.5 12.5"><rect x="0.7" y="0.7" width="9.1" height="11.1" fill="none" stroke="#444" stroke-width="1.3"/><rect x="2.4" y="2.4" width="5.7" height="2.4" fill="#444"/><rect x="2.4" y="6.2" width="2.2" height="1.8" fill="#888"/><rect x="5.9" y="6.2" width="2.2" height="1.8" fill="#888"/><rect x="2.4" y="8.8" width="2.2" height="1.8" fill="#888"/><rect x="5.9" y="8.8" width="2.2" height="1.8" fill="#888"/></svg>
<div class="t" style="left:1335.2px;top:844.3px;font-size:12px;color:#8e8e8e;font-weight:400;">Sweep Angle</div>
<div style="position:absolute;left:1335.2px;top:862.2px;width:247.5px;height:25px;background:#fff;border:1px solid #e4e4e4;border-radius:2px"></div>
<div class="t" style="left:1344.3px;top:868.6px;font-size:12.5px;color:#777;font-weight:400;">0</div>
<svg style="left:1564.5px;top:868.5px" width="10.5" height="12.5" viewBox="0 0 10.5 12.5"><rect x="0.7" y="0.7" width="9.1" height="11.1" fill="none" stroke="#444" stroke-width="1.3"/><rect x="2.4" y="2.4" width="5.7" height="2.4" fill="#444"/><rect x="2.4" y="6.2" width="2.2" height="1.8" fill="#888"/><rect x="5.9" y="6.2" width="2.2" height="1.8" fill="#888"/><rect x="2.4" y="8.8" width="2.2" height="1.8" fill="#888"/><rect x="5.9" y="8.8" width="2.2" height="1.8" fill="#888"/></svg>
<div style="position:absolute;left:334px;top:857px;width:984px;height:43px;background:#fff;border-top:1px solid #e6e6e6"></div>
<div style="position:absolute;left:334px;top:857px;width:6px;height:43px;background:linear-gradient(to right,rgba(0,0,0,0.07),rgba(0,0,0,0))"></div>
<div style="position:absolute;left:781px;top:857px;width:537px;height:43px;background:#fff;border-top:1px solid #e6e6e6;border-left:1px solid #e6e6e6"></div>
<div class="t" style="left:795.0px;top:872.3px;font-size:14px;color:#5a5a5a;font-weight:400;">Explosion Offsets</div>
<div style="position:absolute;left:937px;top:881px;width:156px;height:2px;background:#e8e8e8;border-radius:1px"></div>
<div style="position:absolute;left:921.8px;top:878.2px;width:12.6px;height:12.6px;background:#1b73f5;border-radius:50%;box-shadow:0 0 0 3px #fff,0 1px 5px 2px rgba(0,0,0,0.12)"></div>
<div style="position:absolute;left:1105.5px;top:858px;width:1px;height:42px;background:#ebebeb"></div>
<div style="position:absolute;left:1148.3px;top:858px;width:1px;height:42px;background:#ebebeb"></div>
<div style="position:absolute;left:1190.6px;top:858px;width:1px;height:42px;background:#ebebeb"></div>
<div style="position:absolute;left:1233.6px;top:858px;width:1px;height:42px;background:#ebebeb"></div>
<div style="position:absolute;left:1275.4px;top:858px;width:1px;height:42px;background:#ebebeb"></div>
<svg style="left:0;top:0" width="1600" height="900"><text x="1119.4" y="884.3" font-family="Liberation Sans" font-weight="700" font-size="16.4" fill="#888" textLength="15.6" lengthAdjust="spacingAndGlyphs">2D</text><text x="1162" y="884.3" font-family="Liberation Sans" font-weight="700" font-size="16.4" fill="#888" textLength="15.6" lengthAdjust="spacingAndGlyphs">3D</text></svg>
<svg style="left:1205.5px;top:871px" width="13.5" height="15" viewBox="0 0 13.5 15" fill="none" stroke="#888" stroke-width="1.5" stroke-linejoin="round"><path d="M6.75,0.9 L12.6,4 L12.6,11 L6.75,14.1 L0.9,11 L0.9,4 Z M0.9,4 L6.75,7.2 L12.6,4 M6.75,7.2 L6.75,14.1"/></svg>
<svg style="left:1246px;top:873px" width="17" height="12" viewBox="0 0 17 12"><path d="M0.3,6 C2.6,1.6 5.6,0.3 8.5,0.3 C11.4,0.3 14.4,1.6 16.7,6 C14.4,10.4 11.4,11.7 8.5,11.7 C5.6,11.7 2.6,10.4 0.3,6 Z" fill="#888"/><circle cx="8.5" cy="6" r="3.4" fill="#fff"/><circle cx="8.5" cy="6" r="1.7" fill="#888"/></svg>
<svg style="left:1290px;top:871px" width="15" height="15" viewBox="0 0 15 15"><path d="M7.5,0.3 A7.2,7.2 0 1 1 3.2,13.3 L1.2,14.6 L1.8,11.6 A7.2,7.2 0 0 1 7.5,0.3 Z" fill="#888"/><rect x="6.5" y="3.2" width="2" height="5.8" fill="#fff"/><rect x="6.5" y="10.2" width="2" height="2" fill="#fff"/></svg></body></html>
